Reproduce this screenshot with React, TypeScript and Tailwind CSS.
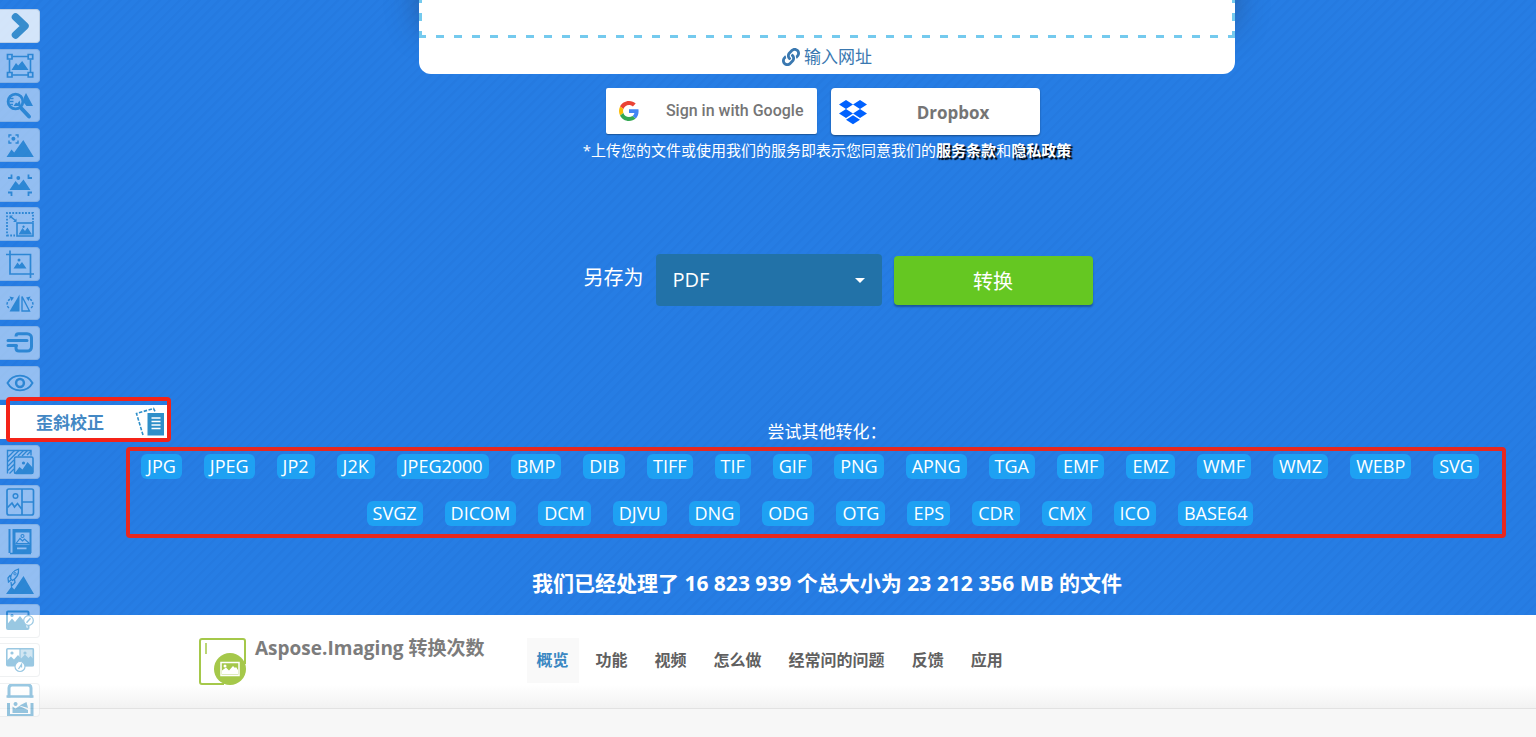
import type { ReactNode } from "react";
import { FaLink } from "react-icons/fa";

const FORMATS = [
  "JPG", "JPEG", "JP2", "J2K", "JPEG2000", "BMP", "DIB", "TIFF", "TIF", "GIF", "PNG", "APNG", "TGA", "EMF", "EMZ",
  "WMF", "WMZ", "WEBP", "SVG", "SVGZ", "DICOM", "DCM", "DJVU", "DNG", "ODG", "OTG", "EPS", "CDR", "CMX", "ICO", "BASE64",
];

const NAV = ["概览", "功能", "视频", "怎么做", "经常问的问题", "反馈", "应用"];

const line = { fill: "none", stroke: "currentColor", strokeWidth: 2 } as const;

type Tool = { name: string; icon: ReactNode; active?: boolean; strong?: boolean };

const TOOLS: Tool[] = [
  {
    name: "展开",
    strong: true,
    icon: <path d="M15.500 8 L25 17 L15.500 26" {...line} strokeWidth={7.5} strokeLinecap="round" strokeLinejoin="round" />,
  },
  {
    name: "调整图像",
    icon: (
      <>
        <path d="M12.5 7.5H28M12.5 26H28M9.5 10.5V23M30.5 10.5V23" {...line} strokeWidth={1.6} />
        <path d="M7.5 5.5h4.5v4.5H7.5zM28.2 5.5h4.5v4.5h-4.5zM7.5 23.5h4.5v4.5H7.5zM28.2 23.5h4.5v4.5h-4.5z" {...line} strokeWidth={1.7} />
        <path d="M11.5 21l4.5-7 2.2 2.6 4-4.6 6.3 9z" fill="currentColor" />
      </>
    ),
  },
  {
    name: "搜索图像",
    icon: (
      <>
        <path d="M26 5l7 13h-6.5l-2.5-3v-6z" fill="currentColor" />
        <circle cx="15.5" cy="13.5" r="7.4" {...line} strokeWidth={2.8} />
        <path d="M21.5 20.5l7.5 8" {...line} strokeWidth={4} strokeLinecap="round" />
        <path d="M9.500 10.500h4M9.500 13.500h4M10 16.500h3" {...line} strokeWidth={1.300} />
        <path d="M13.500 18l2.500-3.500 1.500 1 2-3 1.500 5.500z" fill="currentColor" />
      </>
    ),
  },
  {
    name: "去除对象",
    icon: (
      <>
        <path d="M6.5 29l5-7.5 2.7 3L23.3 12 33.8 29z" fill="currentColor" />
        <circle cx="13.4" cy="10.8" r="2" fill="currentColor" />
        <path d="M9 9.5V7h2.5M15.5 7H18v2.5M18 12.5V15h-2.5M11.5 15H9v-2.5" {...line} strokeWidth={1.4} />
      </>
    ),
  },
  {
    name: "压缩",
    icon: (
      <>
        <path d="M9.5 22l6-9 3.5 4 4.5-5.5L30.5 22z" fill="currentColor" />
        <circle cx="18.3" cy="10" r="1.9" fill="currentColor" />
        <path d="M8 10h3.5V6.5M32 10h-3.5V6.5M8 24.5h3.5V28M32 24.5h-3.5V28" {...line} strokeWidth={1.8} />
      </>
    ),
  },
  {
    name: "调整大小",
    icon: (
      <>
        <path d="M7 29.5V6h26v9M7 28.5h8" {...line} strokeWidth={1.8} strokeDasharray="1.8 1.4" />
        <path d="M10.5 9.5l5.5 4.5" {...line} strokeWidth={1.6} />
        <path d="M9.5 8.5h3.5l-3.5 3.5zM16.5 15h-3.5l3.5-3.5z" fill="currentColor" />
        <rect x="17" y="16" width="16" height="13" {...line} strokeWidth={1.6} />
        <path d="M18.5 27.5l4-6.5 2.5 3 2.5-3.500 4.500 7zM23.500 18.500a1.200 1.200 0 1 0 .1 0" fill="currentColor" />
      </>
    ),
  },
  {
    name: "裁剪",
    icon: (
      <>
        <path d="M10 3.5V27H34M6 7.5H30.5V31" {...line} strokeWidth={1.7} />
        <path d="M13.5 21.5l4-6 2 2.5 2.5-3 4.5 6.5z" fill="currentColor" />
        <circle cx="19" cy="13" r="1.500" fill="currentColor" />
      </>
    ),
  },
  {
    name: "翻转",
    icon: (
      <>
        <path d="M19.5 8.5V25.5H9.5z" fill="currentColor" />
        <path d="M22 10.5V25h7.5z" {...line} strokeWidth={1.4} />
        <path d="M9 22c-3-2-2.5-7.5 2-9.5M31 22c3-2 2.5-7.5-2-9.5" {...line} strokeWidth={1.5} strokeDasharray="2.5 1.5" />
        <path d="M9.5 10.5l4.5 1-2.5 3.5zM30.5 10.5l-4.5 1 2.5 3.5z" fill="currentColor" />
      </>
    ),
  },
  {
    name: "合并",
    icon: (
      <>
        <path d="M16 10.5c0-2 1-2.8 2.5-2.8h8.5c3 0 4.5 2 4.5 4v9c0 3-2 4.3-4.5 4.3h-8c-2 0-3-1-3-2.7V19.5" {...line} strokeWidth={3} />
        <path d="M8 14.5h19M8 19.5h8.5" {...line} strokeWidth={3} strokeLinecap="round" />
      </>
    ),
  },
  {
    name: "查看",
    icon: (
      <>
        <path d="M7.5 17C13 7.2 27 7.2 32.5 17 27 26.8 13 26.8 7.5 17z" {...line} strokeWidth={1.900} />
        <circle cx="20" cy="17" r="3.9" {...line} strokeWidth={2.500} />
      </>
    ),
  },
  {
    name: "歪斜校正",
    active: true,
    icon: (
      <>
        <path d="M13 30l-6.5-21.5 17-5 2 4" {...line} strokeWidth={1.6} strokeDasharray="3.500 1.500" />
        <path d="M17.5 8h16.5v22.5H17.5z" fill="currentColor" />
        <path d="M21.5 13h9M21.5 16.5h9M21.5 20h9M21.5 23.5h9" stroke="white" strokeWidth="1.6" />
      </>
    ),
  },
  {
    name: "去除背景",
    icon: (
      <>
        <path d="M7.5 28.5V5.5H31v5" {...line} strokeWidth={1.4} />
        <path d="M8 12l6.5-6.5M8 16.5l11-11M8 21l6-6M18 11l5.5-5.5M8 25.5l6-6M22 11l5.5-5.5M9.5 28.5l4.500-4.500M27 10l4-4" {...line} strokeWidth={1.4} />
        <rect x="14.5" y="12" width="18.5" height="16.5" rx="1.5" {...line} strokeWidth={1.6} />
        <path d="M14.5 28.5l5-6.5 3 2.5 5-7.5 5.5 6v6H15z" fill="currentColor" />
        <circle cx="23.5" cy="18" r="1.6" fill="currentColor" />
      </>
    ),
  },
  {
    name: "拼贴",
    icon: (
      <>
        <rect x="7" y="4" width="26.5" height="26" rx="2" {...line} strokeWidth={1.700} />
        <path d="M22 4V30M22 17H33.500M7.500 22.500l4.500-4.500 2.500 4 3-3.500 4.500 6" {...line} strokeWidth={1.700} />
        <circle cx="15.5" cy="11" r="2.3" {...line} strokeWidth={1.5} />
      </>
    ),
  },
  {
    name: "相册",
    icon: (
      <>
        <path d="M8.5 5h2v24h-2zM12.5 5H31.5V29H12.5zM15.5 8.5v12h14v-12zM17 23.5v1.8h9.5v-1.8z" fill="currentColor" fillRule="evenodd" />
        <path d="M16 19.500l4-5 2.500 2.500 2-2 5 4.500z" {...line} strokeWidth={1.2} />
        <circle cx="22.5" cy="12" r="1.5" {...line} strokeWidth={1.1} />
        <path d="M10 29.5H31" {...line} strokeWidth={1.3} />
      </>
    ),
  },
  {
    name: "放大",
    icon: (
      <>
        <path d="M6 30l5.5-7.5 2.8 3 9.2-13.5L34 30z" fill="currentColor" />
        <path d="M10.5 14.5c0-4 3-8 8-9.5.5 5-2 9-6 11.5zM10.5 11l-2.500 3 .5 4 2.500-2M14.500 15.500l.5 3-3.500 3.500-.5-4" {...line} strokeWidth={1.3} />
        <circle cx="15" cy="9.8" r="1.2" {...line} strokeWidth={1} />
      </>
    ),
  },
  {
    name: "添加水印",
    icon: (
      <>
        <rect x="7" y="7.5" width="21.5" height="17.5" rx="1" {...line} />
        <path d="M7 24.5v-4l5-6 3 3.5 5-6 5.5 7 1.5 5.5z" fill="currentColor" />
        <circle cx="12" cy="11.5" r="1.6" fill="currentColor" />
        <circle cx="28.5" cy="16.5" r="4.8" fill="white" stroke="currentColor" strokeWidth="1.2" />
        <path d="M26.5 18.8l4-4.5" {...line} strokeWidth={1.4} />
      </>
    ),
  },
  {
    name: "比较",
    icon: (
      <>
        <rect x="20" y="5" width="14" height="18.5" fill="currentColor" opacity=".45" />
        <rect x="6.8" y="5.8" width="26.5" height="17" rx="1" {...line} strokeWidth={1.6} />
        <path d="M20 5.5V19" {...line} strokeWidth={1.2} />
        <path d="M7 23v-5.5l4-4 3 3 4-4.5 3 3.5 4-4 3.5 3.5 2-2 3 3V23z" fill="currentColor" />
        <circle cx="12" cy="10" r="1.6" fill="currentColor" />
        <circle cx="25" cy="10" r="1.6" fill="currentColor" />
        <circle cx="20" cy="23.5" r="5" fill="white" stroke="currentColor" strokeWidth="1.2" />
        <path d="M18.5 26l3-4.5v3" {...line} strokeWidth={1.3} />
      </>
    ),
  },
  {
    name: "扫描",
    icon: (
      <>
        <path d="M9 14.5V5c0-2 1.5-3 3-3h16c2 0 3 1.2 3 3v9.5" {...line} strokeWidth={3} />
        <path d="M6.5 13.5h27" {...line} strokeWidth={2.4} />
        <path d="M8.5 20v12.5h23.500V20" {...line} strokeWidth={3} />
        <path d="M12.500 30v-6.500l3 2 4-2.500 8.500 4v3zM15.500 19a2 2 0 1 0 .1 0M19.500 22.500l7-3.500 1.500 6z" fill="currentColor" />
      </>
    ),
  },
];

function Sidebar() {
  return (
    <nav aria-label="工具" className="fixed top-[9px] bottom-5 left-0 z-10 flex flex-col items-start justify-between">
      {TOOLS.map((tool) =>
        tool.active ? (
          <a key={tool.name} href="#deskew" className="relative flex h-[34px] items-center bg-white pl-9 text-[17px] font-bold text-[#4388c4]">
            {tool.name}
            <svg viewBox="0 0 37 34" className="ml-[26px] h-[34px] w-[37px] text-[#2f8fc9]" aria-hidden="true">
              {tool.icon}
            </svg>
            <span className="pointer-events-none absolute -top-2 -right-1 -bottom-[3px] left-[6px] rounded-[4px] border-4 border-[#f42318]" />
          </a>
        ) : (
          <a
            key={tool.name}
            href="#tool"
            aria-label={tool.name}
            className={`block overflow-hidden rounded-r-[4px] border border-l-0 border-[#dfe3e6] bg-white ${tool.strong ? "opacity-80" : "opacity-50"}`}
          >
            <svg viewBox="0 1 39 32" className={`h-8 w-[39px] ${tool.strong ? "text-[#3d92c8]" : "text-[#3591c6]"}`} aria-hidden="true">
              {tool.icon}
            </svg>
          </a>
        ),
      )}
    </nav>
  );
}

function GoogleLogo() {
  return (
    <svg viewBox="0 0 48 48" className="size-5" aria-hidden="true">
      <path fill="#EA4335" d="M24 9.5c3.54 0 6.71 1.22 9.21 3.6l6.85-6.85C35.9 2.38 30.47 0 24 0 14.62 0 6.51 5.38 2.56 13.22l7.98 6.19C12.43 13.72 17.74 9.5 24 9.5z" />
      <path fill="#4285F4" d="M46.98 24.55c0-1.57-.15-3.09-.38-4.55H24v9.02h12.94c-.58 2.96-2.26 5.48-4.78 7.18l7.73 6c4.51-4.18 7.09-10.36 7.09-17.65z" />
      <path fill="#FBBC05" d="M10.53 28.59c-.48-1.45-.76-2.99-.76-4.59s.27-3.14.76-4.59l-7.98-6.19C.92 16.46 0 20.12 0 24c0 3.88.92 7.54 2.56 10.78l7.97-6.19z" />
      <path fill="#34A853" d="M24 48c6.48 0 11.93-2.13 15.89-5.81l-7.73-6c-2.15 1.45-4.92 2.3-8.16 2.3-6.26 0-11.57-4.22-13.47-9.91l-7.98 6.19C6.51 42.62 14.62 48 24 48z" />
    </svg>
  );
}

function DropboxLogo() {
  return (
    <svg viewBox="0 0 28 25" className="h-[25px] w-7" fill="#0061fe" aria-hidden="true">
      <path d="M7 0l7 4.5L7 9 0 4.5zM21 0l7 4.5L21 9l-7-4.5zM0 13.5L7 9l7 4.5L7 18zM21 9l7 4.5-7 4.5-7-4.5zM7 19.8l7-4.5 7 4.5-7 4.5z" />
    </svg>
  );
}

function ProductLogo() {
  return (
    <svg viewBox="0 0 48 48" className="size-12" aria-hidden="true">
      <path d="M46 26V3q0-2-2-2H3Q1 1 1 3v41q0 2 2 2h22" fill="white" stroke="#a5c84a" strokeWidth="2" />
      <path d="M7 5v11" stroke="#a5c84a" strokeWidth="1.5" />
      <circle cx="31" cy="31" r="16" fill="#a5c84a" />
      <rect x="22" y="24.5" width="18" height="13" fill="none" stroke="white" strokeWidth="1.5" />
      <path d="M23 36.5v-4l4-3 3 3 4-4.5 2 2 1-1 2 3v4.5z" fill="white" />
      <circle cx="26" cy="28" r="1.5" fill="white" />
    </svg>
  );
}

export default function App() {
  return (
    <div className="flex min-h-screen flex-col bg-[#f7f7f7] font-['Open_Sans','Noto_Sans_CJK_SC',sans-serif]">
      <Sidebar />
      <main className="bg-[#267de4] bg-[repeating-linear-gradient(135deg,rgba(0,40,120,0.035)_0px,rgba(0,40,120,0.035)_2px,transparent_3px,transparent_7px)] pl-[118px] text-white">
        <div className="flex flex-col items-center">
          <section className="w-full max-w-[816px] rounded-b-[12px] bg-white shadow-[0_-44px_32px_rgba(40,50,70,0.4)]">
            <div className="h-[38px] bg-[repeating-linear-gradient(90deg,#74caee_0px_8px,transparent_8px_18px),repeating-linear-gradient(0deg,#74caee_0px_7px,transparent_7px_17px,#74caee_17px_18px),repeating-linear-gradient(0deg,#74caee_0px_7px,transparent_7px_17px,#74caee_17px_18px)] bg-[length:100%_3px,3px_100%,3px_100%] bg-[position:-1px_100%,0_0,100%_0] bg-no-repeat" />
            <a href="#url" className="flex h-9 items-center justify-center gap-1 pt-[2px] text-[17px] text-[#3a78b0]">
              <FaLink className="size-[18px]" aria-hidden="true" />
              输入网址
            </a>
          </section>

          <div className="mt-[14px] flex gap-[14px] pr-[9px]">
            <button type="button" className="flex h-[46px] w-[211px] items-center justify-between rounded-[2px] bg-white pr-[13px] pl-[13px] font-['Roboto'] text-[16px] font-medium text-[#757575] shadow-[0_1px_1px_rgba(0,0,0,0.3)]">
              <GoogleLogo />
              Sign in with Google
            </button>
            <button type="button" className="flex h-[47px] w-[209px] items-center rounded-[4px] bg-white pt-[2px] pl-2 text-[17px] font-bold text-[#757575] shadow-[0_1px_2px_rgba(0,0,0,0.4)]">
              <DropboxLogo />
              <span className="flex-1 text-center">Dropbox</span>
            </button>
          </div>

          <p className="mt-[3px] text-[15px] leading-6">
            *上传您的文件或使用我们的服务即表示您同意我们的
            <a href="#terms" className="font-bold [text-shadow:2px_2px_1px_#000]">服务条款</a>和
            <a href="#privacy" className="font-bold [text-shadow:2px_2px_1px_#000]">隐私政策</a>
          </p>

          <form className="mt-[92px] flex items-center gap-3 pr-[5px] pl-[27px] text-[20px]">
            <label htmlFor="format" className="pb-1">另存为</label>
            <div className="relative">
              <select id="format" defaultValue="PDF" className="h-[52px] w-[226px] appearance-none rounded-[4px] bg-[#2272a8] px-[17px] text-white">
                <option>PDF</option>
              </select>
              <svg viewBox="0 0 10 5" className="pointer-events-none absolute top-6 right-[17px] h-[5px] w-[10px]" fill="white" aria-hidden="true">
                <path d="M0 0h10L5 5z" />
              </svg>
            </div>
            <button type="button" className="h-[49px] w-[199px] rounded-[4px] bg-[#65c722] pt-1 shadow-[0_2px_2px_rgba(0,0,0,0.3)]">转换</button>
          </form>

          <h2 className="mt-[113px] text-[17px] leading-[26px]">尝试其他转化：</h2>
        </div>

        <ul className="mt-[2px] mr-[30px] ml-2 flex flex-wrap justify-center gap-[22px] rounded-[4px] border-4 border-[#e8281f] pt-[3px] pr-5 pb-2 pl-2">
          {FORMATS.map((format) => (
            <li key={format}>
              <a href={"#" + format} className="block rounded-[6px] bg-[#1ea1f3] px-[6px] text-[18px] leading-[25px]">
                {format}
              </a>
            </li>
          ))}
        </ul>

        <p className="pt-[29px] pb-4 text-center text-[21px] leading-8 font-bold">我们已经处理了 16 823 939 个总大小为 23 212 356 MB 的文件</p>
      </main>

      <div className="flex items-start border-b border-[#e2e2e2] bg-gradient-to-b from-white from-75% to-[#f2f2f2] pt-[23px] pb-[22px] pl-[199px]">
        <ProductLogo />
        <h1 className="ml-2 text-[19px] leading-5 font-bold text-[#7c7c7c]">Aspose.Imaging 转换次数</h1>
        <nav aria-label="页面" className="ml-[42px] flex gap-[7px] text-[16px] font-bold">
          {NAV.map((item, index) => (
            <a key={item} href={"#section-" + index} className={index === 0 ? "bg-[#f9f9f9] px-[10px] leading-[45px] text-[#3a87c2]" : "px-[10px] leading-[45px] text-[#606060]"}>
              {item}
            </a>
          ))}
        </nav>
      </div>
    </div>
  );
}
